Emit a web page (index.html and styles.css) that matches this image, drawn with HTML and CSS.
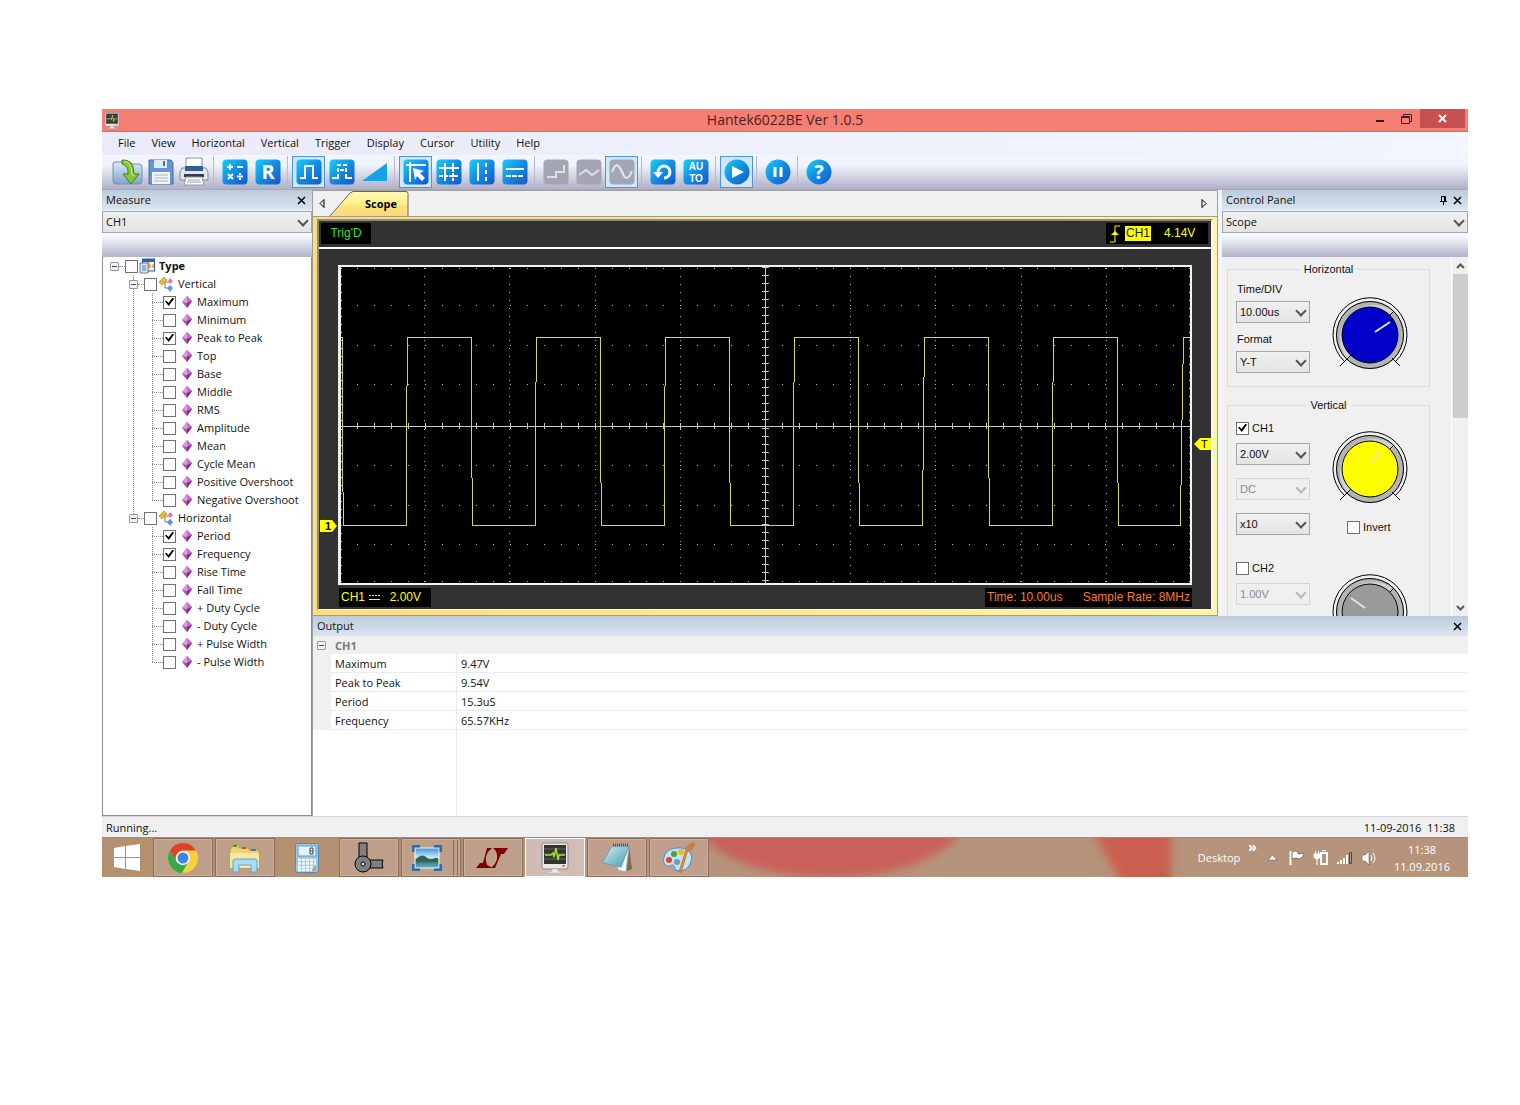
FILE: index.html
```html
<!DOCTYPE html>
<html lang="en">
<head>
<meta charset="utf-8">
<title>Hantek6022BE Ver 1.0.5</title>
<link rel="stylesheet" href="styles.css">
</head>
<body>
<svg class="defs" width="0" height="0" aria-hidden="true">
  <defs>
    <linearGradient id="blue" x1="0" y1="0" x2="1" y2="1"><stop offset="0" stop-color="#16d0fb"/><stop offset=".5" stop-color="#128ce4"/><stop offset="1" stop-color="#1457c8"/></linearGradient>
    <linearGradient id="folder" x1="0" y1="0" x2="0" y2="1"><stop offset="0" stop-color="#dce9f6"/><stop offset="1" stop-color="#7fa4cf"/></linearGradient>
    <linearGradient id="tabfill" x1="0" y1="0" x2="0" y2="1"><stop offset="0" stop-color="#fffbb0"/><stop offset=".5" stop-color="#fff08c"/><stop offset=".6" stop-color="#ffe07c"/><stop offset="1" stop-color="#fddc78"/></linearGradient>
    <linearGradient id="sky" x1="0" y1="0" x2="0" y2="1"><stop offset="0" stop-color="#3f92dc"/><stop offset=".5" stop-color="#d3ecfa"/><stop offset=".6" stop-color="#356c55"/><stop offset="1" stop-color="#5fb3da"/></linearGradient>
    <linearGradient id="note" x1="0" y1="0" x2="1" y2="1"><stop offset="0" stop-color="#d5f0f4"/><stop offset="1" stop-color="#3d9cb4"/></linearGradient>
    <filter id="soft" x="-20%" y="-50%" width="140%" height="200%"><feGaussianBlur stdDeviation="5"/></filter>
    <symbol id="gem" viewBox="0 0 10 12"><path d="M5 0 10 5 5 12 0 6z" fill="#b052b4"/><path d="M5 0 0 6 5 7z" fill="#e09ae0"/><path d="M5 0 10 5 5 7z" fill="#c070c8"/><path d="M5 7 10 5 5 12z" fill="#7c2c88"/></symbol>
    <symbol id="branch" viewBox="0 0 16 16"><path d="M5 6h6M7 6v6h4" fill="none" stroke="#777"/><path d="M1 6 6 1l3 3-5 5z" fill="#e8b830" stroke="#b08414" stroke-width=".6"/><path d="m12 2 3 3-3 3-2-3z" fill="#d472cc"/><path d="m12 9 3 3-3 4-3-4z" fill="#5b98dc"/></symbol>
    <symbol id="scopepc" viewBox="0 0 28 32"><rect x="1" y="1" width="26" height="26" rx="2" fill="#e8e8e8" stroke="#888"/><rect x="3" y="3" width="22" height="19" fill="#333"/><path d="M3 7h22M3 12h22M3 17h22" stroke="#666"/><path d="M4 13h6l2-2 1 4 2-9 2 12 1-5h6" fill="none" stroke="#a8e01c" stroke-width="1.5"/><path d="M21 24h3" stroke="#c22"/><path d="M11 27h6v2l4 1v1H7v-1l4-1z" fill="#ececec" stroke="#aaa" stroke-width=".5"/></symbol>
  </defs>
</svg>
<div class="window">
  <header class="titlebar">
    <svg class="appicon" width="16" height="17"><use href="#scopepc"/></svg>
    <h1>Hantek6022BE Ver 1.0.5</h1>
    <div class="winbtns">
      <button aria-label="Minimize"><svg width="10" height="10"><path d="M1 7h8" stroke="#222" stroke-width="2"/></svg></button>
      <button aria-label="Restore"><svg width="11" height="11" fill="none" stroke="#402020"><path d="M.5 3.500h8v7h-8zM.5 4.500h8M2.500 3V1.500h8v7H9"/></svg></button>
      <button class="close" aria-label="Close"><svg width="9" height="9"><path d="m1 1 7 7m0-7L1 8" stroke="#fff" stroke-width="2"/></svg></button>
    </div>
  </header>

  <nav class="menubar">
    <a href="#">File</a><a href="#">View</a><a href="#">Horizontal</a><a href="#">Vertical</a><a href="#">Trigger</a><a href="#">Display</a><a href="#">Cursor</a><a href="#">Utility</a><a href="#">Help</a>
  </nav>

  <div class="toolbar" role="toolbar" aria-label="Tools">
    <button aria-label="Open"><svg width="32" height="28"><path d="M1 6q0-2 2-2h7l2 2h15q3 0 3 3v14q0 3-3 3H4q-3 0-3-3z" fill="url(#folder)" stroke="#7590b4"/><path d="M10 2q12-1 12 14h5l-8 10-8-10h5Q17 8 10 6z" fill="#85c832" stroke="#417d15"/><path d="M12 3q8 1 8 14h3" fill="none" stroke="#caeb91"/></svg></button>
    <button aria-label="Save"><svg width="26" height="28"><path d="M1 2h22l2 3v21H1z" fill="#6794d3" stroke="#486eaa"/><path d="M6 2h13v8H6z" fill="#dceafa"/><path d="M15 3h2v5h-2z" fill="#4974b3"/><path d="M4 14h18v12H4z" fill="#f3f5f7"/><path d="M6 17h14M6 20h14M6 23h14" stroke="#aab6c4"/></svg></button>
    <button aria-label="Print"><svg width="30" height="30"><path d="M7 1h16v11H7z" fill="#fff" stroke="#8494a9"/><path d="M3 11h24l2 4v8H1v-8z" fill="#e3e7ec" stroke="#7e8a99"/><path d="M6 9h18v5H6z" fill="#345b94"/><path d="M5 17h20v3H5z" fill="#323d4c"/><path d="M7 20h16l2 8H5z" fill="#fff" stroke="#8d99a8"/><path d="M9 23h12M8 25h14" stroke="#9ba8b8"/></svg></button>
    <i></i>
    <button aria-label="Math"><svg width="26" height="26"><rect x=".5" y=".5" width="25" height="25" rx="4" fill="url(#blue)"/><path d="M5 8h6M8 5v6M15 8h6M6 15l5 5m0-5-5 5M15 17.500h6" stroke="#fff" stroke-width="2"/><path d="M17 14h2v2h-2zM17 19h2v2h-2z" fill="#fff"/></svg></button>
    <button aria-label="Reference"><svg width="26" height="26"><rect x=".5" y=".5" width="25" height="25" rx="4" fill="url(#blue)"/><text x="13" y="20" text-anchor="middle" class="t-r">R</text></svg></button>
    <i></i>
    <button class="on" aria-label="Square wave"><svg width="26" height="26"><rect x=".5" y=".5" width="25" height="25" rx="4" fill="url(#blue)"/><path d="M4 19h5V7h8v12h5" fill="none" stroke="#fff" stroke-width="2"/></svg></button>
    <button aria-label="Dotted wave"><svg width="26" height="26"><rect x=".5" y=".5" width="25" height="25" rx="4" fill="url(#blue)"/><path d="M3 19h7m6 0h7M8 6h4m2 0h4M11 11h4" fill="none" stroke="#fff" stroke-width="2"/><path d="M9 9v4m0 2v4m8-10v4m0 2v4" stroke="#fff" stroke-width="2"/></svg></button>
    <button aria-label="Ramp"><svg width="26" height="26"><path d="M0 22 25 4v18z" fill="#18a4e4"/></svg></button>
    <i></i>
    <button class="on" aria-label="Cursor track"><svg width="26" height="26"><rect x=".5" y=".5" width="25" height="25" rx="4" fill="url(#blue)"/><path d="M3 6h20M7 3v20" stroke="#fff" stroke-width="2"/><path d="m10 9 11 3-4 2 5 5-3 3-5-5-2 4z" fill="#fff"/></svg></button>
    <button aria-label="Cursor cross"><svg width="26" height="26"><rect x=".5" y=".5" width="25" height="25" rx="4" fill="url(#blue)"/><path d="M3 9h20M9 4v18" stroke="#fff" stroke-width="2"/><path d="M3 17h20M17 4v18" stroke="#fff" stroke-width="2" stroke-dasharray="4 1"/></svg></button>
    <button aria-label="Cursor vertical"><svg width="26" height="26"><rect x=".5" y=".5" width="25" height="25" rx="4" fill="url(#blue)"/><path d="M9 4v18" stroke="#fff" stroke-width="2"/><path d="M17 4v18" stroke="#fff" stroke-width="2" stroke-dasharray="4 3"/></svg></button>
    <button aria-label="Cursor horizontal"><svg width="26" height="26"><rect x=".5" y=".5" width="25" height="25" rx="4" fill="url(#blue)"/><path d="M4 10h18" stroke="#fff" stroke-width="2"/><path d="M4 17h18" stroke="#fff" stroke-width="2" stroke-dasharray="5 1"/></svg></button>
    <i></i>
    <button aria-label="Step"><svg width="26" height="26"><rect x=".5" y=".5" width="25" height="25" rx="4" fill="#a4a6b4"/><path d="M4 18h9v-5h8V6" fill="none" stroke="#dfe1ea" stroke-width="2"/></svg></button>
    <button aria-label="Linear"><svg width="26" height="26"><rect x=".5" y=".5" width="25" height="25" rx="4" fill="#a4a6b4"/><path d="m3 16 7-5 6 5 7-5" fill="none" stroke="#dfe1ea" stroke-width="2"/></svg></button>
    <button class="on" aria-label="Sine"><svg width="26" height="26"><rect x=".5" y=".5" width="25" height="25" rx="4" fill="#a4a6b4"/><path d="M3 13C7 2 10 6 13 13s6 9 10-1" fill="none" stroke="#e4e6ee" stroke-width="2"/></svg></button>
    <i></i>
    <button aria-label="Reset"><svg width="26" height="26"><rect x=".5" y=".5" width="25" height="25" rx="4" fill="url(#blue)"/><path d="M8 13a6 6 0 1 1 6 6" fill="none" stroke="#fff" stroke-width="3"/><path d="M3 13h10l-5 6z" fill="#fff"/></svg></button>
    <button aria-label="Auto"><svg width="26" height="26"><rect x=".5" y=".5" width="25" height="25" rx="4" fill="url(#blue)"/><text x="13" y="11" text-anchor="middle" class="t-a">AU</text><text x="13" y="23" text-anchor="middle" class="t-a">TO</text></svg></button>
    <i></i>
    <button class="on" aria-label="Run"><svg width="26" height="26"><circle cx="13" cy="13" r="12.500" fill="url(#blue)"/><path d="m8 7 12 6-12 6z" fill="#fff"/></svg></button>
    <i></i>
    <button aria-label="Pause"><svg width="26" height="26"><circle cx="13" cy="13" r="12.500" fill="url(#blue)"/><path d="M10 8v10m6-10v10" stroke="#fff" stroke-width="3"/></svg></button>
    <i></i>
    <button aria-label="Help"><svg width="26" height="26"><circle cx="13" cy="13" r="12.500" fill="url(#blue)"/><text x="13" y="20" text-anchor="middle" class="t-r">?</text></svg></button>
  </div>

  <main class="work">
    <aside class="measure">
      <div class="panelhead"><h2>Measure</h2><button aria-label="Close measure"><svg width="9" height="9"><path d="m1 1 7 7m0-7L1 8" stroke="#000" stroke-width="1.500"/></svg></button></div>
      <label class="combo wide"><select aria-label="Channel"><option>CH1</option></select></label>
      <div class="strip"></div>
      <div class="tree">
        <div class="row root"><b class="exp"></b><s></s><input type="checkbox" id="m0"><svg width="16" height="16"><rect x="3.500" y="1" width="12" height="12" fill="#f4f7fc" stroke="#2c559c"/><path d="M3 1h13v3H3z" fill="#2d62bb"/><path d="M9 4v8M5 8h10" stroke="#e4ae25" stroke-width="3" stroke-dasharray="3 1"/><path d="M1 5h8v10H1z" fill="#d8e6f7" stroke="#5b80b5"/><path d="M3 8h4M3 10h4M3 12h4" stroke="#5b80b5"/></svg><label for="m0">Type</label></div>
        <ul class="groups">
          <li>
            <div class="row"><b class="exp"></b><s></s><input type="checkbox" id="m1"><svg width="16" height="16"><use href="#branch"/></svg><label for="m1">Vertical</label></div>
            <ul class="leaves">
              <li><s></s><input type="checkbox" id="v1" checked><svg width="10" height="12"><use href="#gem"/></svg><label for="v1">Maximum</label></li>
              <li><s></s><input type="checkbox" id="v2"><svg width="10" height="12"><use href="#gem"/></svg><label for="v2">Minimum</label></li>
              <li><s></s><input type="checkbox" id="v3" checked><svg width="10" height="12"><use href="#gem"/></svg><label for="v3">Peak to Peak</label></li>
              <li><s></s><input type="checkbox" id="v4"><svg width="10" height="12"><use href="#gem"/></svg><label for="v4">Top</label></li>
              <li><s></s><input type="checkbox" id="v5"><svg width="10" height="12"><use href="#gem"/></svg><label for="v5">Base</label></li>
              <li><s></s><input type="checkbox" id="v6"><svg width="10" height="12"><use href="#gem"/></svg><label for="v6">Middle</label></li>
              <li><s></s><input type="checkbox" id="v7"><svg width="10" height="12"><use href="#gem"/></svg><label for="v7">RMS</label></li>
              <li><s></s><input type="checkbox" id="v8"><svg width="10" height="12"><use href="#gem"/></svg><label for="v8">Amplitude</label></li>
              <li><s></s><input type="checkbox" id="v9"><svg width="10" height="12"><use href="#gem"/></svg><label for="v9">Mean</label></li>
              <li><s></s><input type="checkbox" id="v10"><svg width="10" height="12"><use href="#gem"/></svg><label for="v10">Cycle Mean</label></li>
              <li><s></s><input type="checkbox" id="v11"><svg width="10" height="12"><use href="#gem"/></svg><label for="v11">Positive Overshoot</label></li>
              <li><s></s><input type="checkbox" id="v12"><svg width="10" height="12"><use href="#gem"/></svg><label for="v12">Negative Overshoot</label></li>
            </ul>
          </li>
          <li>
            <div class="row"><b class="exp"></b><s></s><input type="checkbox" id="m2"><svg width="16" height="16"><use href="#branch"/></svg><label for="m2">Horizontal</label></div>
            <ul class="leaves">
              <li><s></s><input type="checkbox" id="h1" checked><svg width="10" height="12"><use href="#gem"/></svg><label for="h1">Period</label></li>
              <li><s></s><input type="checkbox" id="h2" checked><svg width="10" height="12"><use href="#gem"/></svg><label for="h2">Frequency</label></li>
              <li><s></s><input type="checkbox" id="h3"><svg width="10" height="12"><use href="#gem"/></svg><label for="h3">Rise Time</label></li>
              <li><s></s><input type="checkbox" id="h4"><svg width="10" height="12"><use href="#gem"/></svg><label for="h4">Fall Time</label></li>
              <li><s></s><input type="checkbox" id="h5"><svg width="10" height="12"><use href="#gem"/></svg><label for="h5">+ Duty Cycle</label></li>
              <li><s></s><input type="checkbox" id="h6"><svg width="10" height="12"><use href="#gem"/></svg><label for="h6">- Duty Cycle</label></li>
              <li><s></s><input type="checkbox" id="h7"><svg width="10" height="12"><use href="#gem"/></svg><label for="h7">+ Pulse Width</label></li>
              <li><s></s><input type="checkbox" id="h8"><svg width="10" height="12"><use href="#gem"/></svg><label for="h8">- Pulse Width</label></li>
            </ul>
          </li>
        </ul>
      </div>
    </aside>

    <section class="scope">
      <div class="tabs">
        <button class="arrow" aria-label="Previous tab"><svg width="6" height="9"><path d="M5 .5v8L1 4.500z" fill="none" stroke="#000"/></svg></button>
        <button class="tab"><svg width="80" height="25"><path d="M0 25 20 2 23 .5h53q2 0 2 2V25" fill="url(#tabfill)" stroke="#666"/></svg><span>Scope</span></button>
        <button class="arrow" aria-label="Next tab"><svg width="6" height="9"><path d="M1 .5v8l4-4z" fill="none" stroke="#000"/></svg></button>
      </div>
      <div class="frame">
        <div class="screen">
          <div class="status">
            <span class="trig">Trig'D</span>
            <span class="level"><svg width="10" height="18"><path d="M0 17h5V1h5" fill="none" stroke="#ff0"/><path d="m5 6 4 4H1z" fill="#ff0"/></svg><mark>CH1</mark><span>4.14V</span></span>
          </div>
          <div class="plotarea">
            <svg class="marker one" width="17" height="12"><path d="M0 0h12l5 6-5 6H0z" fill="#ff0"/><text x="5" y="10">1</text></svg>
            <div class="plot">
              <svg viewBox="0 0 849 315" preserveAspectRatio="none" shape-rendering="crispEdges" role="img" aria-label="Channel 1 square wave">
                <g stroke="#b8b8b8" stroke-dasharray="1 16" fill="none">
                  <path d="M-1 1.500h850M-1 38.500h850M-1 78.500h850M-1 117.500h850M-1 197.500h850M-1 237.500h850M-1 276.500h850M-1 313.500h850"/>
                </g>
                <g stroke="#b8b8b8" stroke-dasharray="1 7" fill="none">
                  <path d="M.5 1v314M83.500 1v314M168.500 1v314M254.500 1v314M339.500 1v314M509.500 1v314M594.500 1v314M680.500 1v314M765.500 1v314M848.500 1v314"/>
                </g>
                <path d="M0 158.500h849M424.500 0v315" stroke="#c8c8c8"/>
                <path d="M-1 158.500h850" stroke="#c8c8c8" stroke-width="5" stroke-dasharray="1 16"/>
                <path d="M424.500 0v315" stroke="#c8c8c8" stroke-width="7" stroke-dasharray="1 7"/>
                <path d="M0 70.500h1.500v120l1 67h63v-87l1-100h64v90l1 97h63v-97l1-90h64v100l1 87h63v-87l1-100h64v100l1 87h63v-97l1-90h64v100l1 87h63l1-107 1-80h64v90l1 97h63v-97l1-90h64v100l1 87h62l1-77 2-110h7" fill="none" stroke="#d8d850"/>
              </svg>
            </div>
            <svg class="marker trg" width="17" height="12"><path d="M17 0H6L0 6l6 6h11z" fill="#ff0"/><text x="7" y="10">T</text></svg>
          </div>
          <div class="readout">
            <span class="chan">CH1<svg width="11" height="7"><path d="M0 1.500h11" stroke="#ff0" stroke-dasharray="2 1"/><path d="M0 5.500h11" stroke="#ff0"/></svg><span>2.00V</span></span>
            <span class="time"><span>Time: 10.00us</span><span>Sample Rate: 8MHz</span></span>
          </div>
        </div>
      </div>
    </section>

    <aside class="control">
      <div class="panelhead"><h2>Control Panel</h2><button aria-label="Pin"><svg width="9" height="10" stroke="#000" fill="none"><path d="M2.500 6V1.500h4V6M5.500 1v5M1 6.500h7M4.500 7v3"/></svg></button><button aria-label="Close control panel"><svg width="9" height="9"><path d="m1 1 7 7m0-7L1 8" stroke="#000" stroke-width="1.500"/></svg></button></div>
      <label class="combo wide"><select aria-label="Panel"><option>Scope</option></select></label>
      <div class="strip"></div>
      <div class="scroller">
        <div class="boxes">
          <fieldset class="hor">
            <legend>Horizontal</legend>
            <div class="fields">
              <label class="cap" for="tdiv">Time/DIV</label>
              <span class="combo"><select id="tdiv"><option>10.00us</option></select></span>
              <label class="cap" for="fmt">Format</label>
              <span class="combo"><select id="fmt"><option>Y-T</option></select></span>
            </div>
            <svg class="knob" width="76" height="76" fill="none" stroke="#000"><circle cx="38" cy="38" r="34" fill="#b4b4b4" stroke="none"/><path d="M15 62A33.500 33.500 0 0 1 62 15L38 38z" fill="#d2d2d2" stroke="none"/><path d="M8 69 19 58M68 69 60 61M57 19l5-5"/><path d="M13 65A37 37 0 1 1 63 65"/><circle cx="38" cy="38" r="33.500"/><circle cx="38" cy="38" r="28" fill="#0000c8"/><path d="m43 35 15-10" stroke="#e4e4f4" stroke-width="2"/></svg>
          </fieldset>
          <fieldset class="ver">
            <legend>Vertical</legend>
            <div class="fields">
              <label class="tick"><input type="checkbox" checked>CH1</label>
              <span class="combo"><select aria-label="CH1 volts"><option>2.00V</option></select></span>
              <span class="combo off"><select aria-label="CH1 coupling" disabled><option>DC</option></select></span>
              <span class="combo"><select aria-label="CH1 probe"><option>x10</option></select></span>
              <label class="tick second"><input type="checkbox">CH2</label>
              <span class="combo off"><select aria-label="CH2 volts" disabled><option>1.00V</option></select></span>
            </div>
            <div class="knobs">
              <svg class="knob" width="76" height="76" fill="none" stroke="#000"><circle cx="38" cy="38" r="34" fill="#b4b4b4" stroke="none"/><path d="M15 62A33.500 33.500 0 0 1 62 15L38 38z" fill="#d2d2d2" stroke="none"/><path d="M8 69 19 58M68 69 60 61M57 19l5-5"/><path d="M13 65A37 37 0 1 1 63 65"/><circle cx="38" cy="38" r="33.500"/><circle cx="38" cy="38" r="28" fill="#ff0"/><path d="m41 33 6-15" stroke="#e8e8a0" stroke-width="2"/></svg>
              <label class="tick"><input type="checkbox">Invert</label>
              <svg class="knob" width="76" height="76" fill="none" stroke="#000"><circle cx="38" cy="38" r="34" fill="#b4b4b4" stroke="none"/><path d="M15 62A33.500 33.500 0 0 1 62 15L38 38z" fill="#d2d2d2" stroke="none"/><path d="M8 69 19 58M68 69 60 61M57 19l5-5"/><path d="M13 65A37 37 0 1 1 63 65"/><circle cx="38" cy="38" r="33.500"/><circle cx="38" cy="38" r="28" fill="#9a9a9a"/><path d="m19 24 14 10" stroke="#e4e4d0" stroke-width="2"/></svg>
            </div>
          </fieldset>
        </div>
        <div class="bar"><svg width="9" height="7"><path d="m1 5 3.500-3.500L8 5" fill="none" stroke="#555" stroke-width="2"/></svg><i></i><svg width="9" height="7"><path d="m1 2 3.500 3.500L8 2" fill="none" stroke="#555" stroke-width="2"/></svg></div>
      </div>
    </aside>

    <section class="output">
      <div class="panelhead"><h2>Output</h2><button aria-label="Close output"><svg width="9" height="9"><path d="m1 1 7 7m0-7L1 8" stroke="#000" stroke-width="1.500"/></svg></button></div>
      <div class="results">
        <table>
          <colgroup><col class="c-gut"><col class="c-name"><col></colgroup>
          <thead><tr><th class="gut"><b class="exp"></b></th><th colspan="2">CH1</th></tr></thead>
          <tbody>
            <tr><td class="gut"></td><td class="name">Maximum</td><td>9.47V</td></tr>
            <tr><td class="gut"></td><td class="name">Peak to Peak</td><td>9.54V</td></tr>
            <tr><td class="gut"></td><td class="name">Period</td><td>15.3uS</td></tr>
            <tr><td class="gut"></td><td class="name">Frequency</td><td>65.57KHz</td></tr>
          </tbody>
        </table>
      </div>
    </section>
  </main>

  <footer class="statusbar"><span>Running...</span><span>11-09-2016&nbsp; 11:38</span></footer>

  <div class="taskbar">
    <svg class="wall" width="1366" height="40" aria-hidden="true"><rect width="1366" height="40" fill="#b6947b"/><rect width="420" height="40" fill="#b08e6c" opacity=".7"/><g filter="url(#soft)"><ellipse cx="728" cy="-30" rx="140" ry="70" fill="#c9605a"/><path d="M985-15h84v70h-43z" fill="#cb5f50"/><path d="M1030 50l39-20v20z" fill="#b4663c"/></g></svg>
    <button class="start" aria-label="Start"><svg width="28" height="28" fill="#fff"><path d="M1 4 12 2v11H1zM13 2l14-2v13H13zM1 14h11v11L1 23zM13 14h14v13l-14-2z"/></svg></button>
    <button class="task" aria-label="Chrome"><svg width="30" height="30"><circle cx="15" cy="15" r="15" fill="#fcd03c"/><path d="M2 7.500A15 15 0 0 1 28 7.500H15a7.500 7.500 0 0 0-6.500 11z" fill="#e0412f"/><path d="M2 7.500A15 15 0 0 0 14 30l6.500-11.500a7.500 7.500 0 0 1-12 0z" fill="#36a852"/><circle cx="15" cy="15" r="7" fill="#fff"/><circle cx="15" cy="15" r="5.500" fill="#3f83ee"/></svg></button>
    <button class="task" aria-label="File Explorer"><svg width="32" height="30"><path d="M1 5h2V2h7v3h10v2h10v18H1z" fill="#ecd47c" stroke="#b99a42"/><path d="M4 2h4v2H4z" fill="#2e9c46"/><path d="M13 4h4v2h-4z" fill="#d34c2c"/><path d="M22 6h5v2h-5z" fill="#3681cc"/><path d="M1 10h29v15H1z" fill="#f7e79f"/><path d="M4 18q0-2 2-2h20q2 0 2 2v11h-6v-7H10v7H4z" fill="#a8daf0" stroke="#5aa8cf"/></svg></button>
    <button class="task plain" aria-label="Calculator"><svg width="24" height="30"><rect x=".5" y=".5" width="23" height="29" rx="2" fill="#9cc6e8" stroke="#5888b4"/><rect x="3" y="3" width="18" height="10" fill="#e2f1fa" stroke="#6e99bd"/><path d="M15 5h3v6h-3zM15 8h3" fill="none" stroke="#345"/><path d="M3 17h18M3 20.500h18M3 24h18M3 27h14" stroke="#f4faff" stroke-width="2.500" stroke-dasharray="3 1"/><path d="M18 23h3v5h-3z" fill="#e99b38"/></svg></button>
    <button class="task" aria-label="Linkage tool"><svg width="32" height="32" fill="#808080" stroke="#000"><path d="M6 1h8v16H6zM15 18h15l-1 4 1 4H15z"/><circle cx="10" cy="22" r="8"/><circle cx="10" cy="22" r="2" fill="#ddd"/></svg></button>
    <button class="task stack" aria-label="Photos"><svg width="30" height="26"><rect x="3" y="3" width="24" height="20" fill="url(#sky)" stroke="#f2f8fc"/><path d="M4 14q6-6 10-2t9 1h3v4H4z" fill="#2f6450"/><path d="M1 7V1h7M22 1h7v6M29 19v6h-7M8 25H1v-6" fill="none" stroke="#2a6cb0" stroke-width="3"/></svg></button>
    <button class="task" aria-label="LTspice"><svg width="34" height="22" fill="#7c0000"><path d="M11 1h5q-9 7-5 17l6 3H0l4-5h3z"/><path d="M17 1h15l-4 6h-3l-6 14h-4q9-7 5-17z"/></svg></button>
    <button class="task active" aria-label="Hantek6022BE"><svg width="28" height="32"><use href="#scopepc"/></svg></button>
    <button class="task" aria-label="Notepad"><svg width="32" height="30"><path d="M28 3l3 23-7 3z" fill="#7d6a4d"/><path d="M12 3 28 3l-3 26-8-2z" fill="#f0f4f4" stroke="#a5b0b4"/><path d="M11 3h17l-8 21L1 20z" fill="url(#note)" stroke="#709ca8"/><path d="M12 2h16" stroke="#555" stroke-width="3" stroke-dasharray="1 1"/></svg></button>
    <button class="task" aria-label="Paint"><svg width="34" height="32"><path d="M15 6C5 6 0 14 2 21q3 5 8 2 3 0 3 5 9 3 14-4C34 12 26 5 15 6z" fill="#c3e2f3" stroke="#4a8db8"/><circle cx="7" cy="18" r="3" fill="#d94a34"/><circle cx="12" cy="12" r="3" fill="#45a047"/><circle cx="19" cy="10" r="3" fill="#efb72c"/><circle cx="15" cy="20" r="3" fill="#7a9bb0"/><path d="m26 8-7 23-2-1 7-23z" fill="#e08a35" stroke="#a8601c" stroke-width=".5"/><path d="M24 8q-2-5 8-8 3 5-4 9z" fill="#bf8450"/></svg></button>
    <div class="tray">
      <span class="desk">Desktop</span>
      <span class="more">»</span>
      <svg class="up" width="9" height="6"><path d="M0 5 4.500 0 9 5z" fill="#fff" stroke="#555" stroke-width=".5"/></svg>
      <svg width="16" height="16"><path d="M1.500 1v14" stroke="#fff" stroke-width="2"/><path d="M3 2q4-2 6 0v2q3 0 6-1-1 5-5 6-3-2-7 0z" fill="#fff" stroke="#544" stroke-width=".6"/></svg>
      <svg width="16" height="16" fill="none" stroke="#fff"><rect x="8" y="3" width="6" height="11" stroke-width="2"/><path d="M9 .5h4M2.500 1v4M5.500 1v4M4 8v7"/><path d="M1 4h6v3L5 9H3L1 7z" fill="#fff"/></svg>
      <svg width="16" height="14" fill="#fff"><path d="M0 11h2v2H0zM3 9h2v4H3zM6 7h2v6H6zM9 4h2v9H9z"/><path d="M12.500 1.500h2v11h-2z" fill="#a79a92" stroke="#544"/></svg>
      <svg width="16" height="16" fill="none" stroke="#fff"><path d="M1 5h3l4-4v14l-4-4H1z" fill="#fff" stroke="#544" stroke-width=".5"/><path d="M10 5q2 3 0 6M12 3q4 5 0 10"/></svg>
      <time>11:38<br>11.09.2016</time>
    </div>
  </div>
</div>
</body>
</html>
```
FILE: styles.css
```css
* { box-sizing: border-box; }
body { margin: 0; padding: 109px 52px 0 102px; background: #fff; font: 11px/18px "Open Sans", "Noto Sans", sans-serif; color: #111; }
h1, h2, ul, fieldset { margin: 0; padding: 0; font-weight: 400; }
h2 { font-size: 11px; }
ul { list-style: none; }
button { padding: 0; border: 0; background: none; font: inherit; color: inherit; display: grid; place-items: center; }
svg { display: block; flex: none; }
.defs { position: absolute; }
.window { background: #f0f0f0; }

.titlebar { height: 23px; display: grid; grid-template-columns: 160px 1fr 160px; align-items: center; background: #f67f74; border-bottom: 1px solid #cf7068; }
.titlebar h1 { text-align: center; font-size: 14px; line-height: 22px; color: #4a2320; }
.appicon { margin-left: 2px; }
.winbtns { display: flex; justify-content: flex-end; align-self: start; padding-right: 3px; }
.winbtns button { width: 26px; height: 19px; }
.winbtns button.close { width: 45px; background: #c75050; margin-left: 1px; }

.menubar { display: flex; gap: 16px; height: 23px; padding-left: 16px; background: linear-gradient(90deg, #eaeafa, #f2f6fe); line-height: 22px; }
.menubar a { color: #111; text-decoration: none; }

.toolbar { display: flex; height: 35px; padding: 1px 0 0 9px; background: linear-gradient(#f3f6fd, #f0f3fb 30%, #b0b0c8); border-bottom: 1px solid #a8a8b8; }
.toolbar button { width: 33px; height: 32px; }
.toolbar button.on { border: 1px solid #4a97e0; background: #cfe6fb; }
.toolbar i { width: 8px; height: 32px; border-right: 4px solid transparent; border-left: 3px solid transparent; background: #b8bac6; background-clip: padding-box; }
.t-r { font: 700 20px "Open Sans", sans-serif; fill: #fff; }
.t-a { font: 700 10px "Liberation Sans", sans-serif; fill: #fff; }

.work { display: grid; grid-template-columns: 210px 1fr 250px; grid-template-rows: 426px 200px; background: #f0f4fc; }
.measure { grid-row: 1 / 3; display: flex; flex-direction: column; }
.panelhead { display: flex; align-items: center; height: 20px; padding: 0 5px 0 4px; background: linear-gradient(#bccbdb, #d9e5f0); }
.panelhead h2 { flex: 1; }
.panelhead button { width: 17px; height: 17px; margin-right: -3px; }
.combo { position: relative; display: block; }
.combo::after { content: ""; position: absolute; right: 5px; top: 6px; width: 6px; height: 6px; border: solid #555; border-width: 0 2px 2px 0; transform: rotate(45deg); pointer-events: none; }
.combo select { appearance: none; display: block; width: 100%; height: 22px; padding: 0 3px; border: 1px solid #a6a6a6; border-radius: 0; background: linear-gradient(#f0f0f0, #e4e4e4); font: inherit; color: inherit; }
.combo.wide { margin-top: 1px; }
.combo.off select { border-color: #d4d4d4; background: #efefef; color: #8a8a8a; opacity: 1; }
.combo.off::after { border-color: #b8b8b8; }
.strip { height: 24px; background: linear-gradient(#f4f7fe 15%, #b2b2c8); }

.tree { flex: 1; padding: 0 0 0 7px; background: #fff; border: 1px solid #8c8c8c; border-top: 0; }
.row, .leaves li { display: flex; align-items: center; height: 18px; white-space: nowrap; }
.exp { width: 9px; height: 9px; flex: none; border: 1px solid #999; border-radius: 1px; background: linear-gradient(#3b4a7c, #3b4a7c) center / 5px 1px no-repeat #f2f2f2; }
.tree s { width: 6px; height: 1px; border-top: 1px dotted #888; }
.row svg { margin: 0 4px 0 1px; }
.root label { font-weight: 700; }
.groups { padding-left: 19px; position: relative; }
.groups::before { content: ""; position: absolute; left: 23px; top: 0; bottom: 153px; border-left: 1px dotted #888; }
.groups .exp { position: relative; }
.leaves { padding-left: 23px; position: relative; }
.leaves::before { content: ""; position: absolute; left: 23px; top: 0; bottom: 9px; border-left: 1px dotted #888; }
.leaves s { width: 11px; }
.leaves svg { margin: 0 5px 0 6px; }
input[type="checkbox"] { appearance: none; flex: none; width: 13px; height: 13px; margin: 0; border: 1px solid #707070; background: #fff; display: grid; place-items: center; }
input:checked::before { content: ""; width: 9px; height: 9px; background: #000; clip-path: polygon(0 45%, 15% 35%, 38% 60%, 85% 0, 100% 15%, 42% 95%); }

.scope { display: flex; flex-direction: column; }
.tabs { display: flex; height: 26px; align-items: flex-end; border: solid #a0a0a0; border-width: 1px 1px 0; background: #f0f0f0; }
.arrow { width: 17px; height: 25px; }
.arrow:last-child { margin: 0 5px 0 auto; }
.tab > * { grid-area: 1 / 1; }
.tab span { padding-left: 22px; font-weight: 700; color: #000; }
.frame { flex: 1; display: flex; padding: 2px 4px 5px; border: 1px solid #a09c8c; background: linear-gradient(90deg, #fddc80, #fdf6a4); }
.screen { flex: 1; display: flex; flex-direction: column; background: #323232; border: solid; border-width: 2px 2px 1px; border-color: #8c8a7c #f8f8f0 #f8f8f0 #8c8a7c; font: 12px/21px "Liberation Sans", Arial, sans-serif; }
.status { display: flex; justify-content: space-between; height: 28px; padding: 2px 3px 3px 2px; border-bottom: 2px solid #fff; }
.trig { width: 50px; text-align: center; background: #000; color: #30e040; }
.level { display: flex; align-items: center; width: 102px; padding-left: 4px; background: #000; color: #ff0; }
.level mark { margin: 0 13px 0 5px; padding: 0 1px; line-height: 15px; background: #ff0; color: #222; }
.plotarea { position: relative; flex: 1; display: flex; padding: 16px 19px 0; }
.plot { flex: 1; border: solid #f2f2f2; border-width: 2px 2px 2px 3px; background: #000; }
.plot svg { width: 100%; height: 100%; }
.marker { position: absolute; top: 271px; left: 1px; font: 700 11px "Liberation Sans", sans-serif; }
.marker.trg { top: 189px; left: auto; right: 0; font-weight: 400; }
.readout { display: flex; justify-content: space-between; padding: 3px 19px 2px 20px; line-height: 19px; }
.readout > span { display: flex; align-items: center; background: #000; }
.readout .chan { width: 92px; justify-content: space-between; padding: 0 10px 0 2px; color: #ff0; }
.chan svg { margin-right: 6px; }
.readout .time { gap: 20px; padding: 0 2px; color: #f47a2c; }

.control { display: flex; flex-direction: column; padding-left: 4px; min-height: 0; }
.scroller { flex: 1; min-height: 0; display: flex; overflow: hidden; background: #f0f0f0; font: 11px/14px "Liberation Sans", Arial, sans-serif; }
.boxes { flex: 1; padding: 4px 21px 0 5px; height: 0; }
.bar { display: flex; flex-direction: column; align-items: center; width: 17px; padding: 6px 0 5px; border-left: 1px solid #fff; }
.bar i { width: 15px; height: 144px; margin: 4px 0 auto; background: #cdcdcd; }
fieldset { border: 1px solid #dcdcdc; display: flex; justify-content: space-between; padding: 0 8px 11px; min-width: 0; }
legend { margin: 0 auto; padding: 0 4px; line-height: 16px; }
.fields { width: 74px; }
.fields .combo { margin-bottom: 13px; }
.cap { display: block; margin: 5px 0; padding-left: 1px; }
.hor .cap + .combo { margin-bottom: 9px; }
.hor .cap + .combo:last-child { margin-bottom: 2px; }
.hor .knob { margin: 20px 13px 0 0; }
.ver { margin-top: 10px; }
.tick { display: flex; align-items: center; gap: 3px; height: 14px; }
.fields .tick { margin: 8px 0; }
.fields .second { margin-top: 26px; }
.knobs { margin: 18px 13px 0 0; }
.knobs .tick { margin: 13px 0 40px 15px; }

.output { grid-column: 2 / 4; border-left: 1px solid #a0a0a0; display: flex; flex-direction: column; background: #fff; }
.output h2 { line-height: 20px; }
.results { flex: 1; background: linear-gradient(#ececec, #ececec) 143px 0 / 1px 100% no-repeat; }
table { width: 100%; border-collapse: separate; border-spacing: 0; table-layout: fixed; line-height: 17px; }
td, th { height: 19px; padding: 0 4px; text-align: left; border-bottom: 1px solid #ececec; }
th { height: 18px; padding-top: 0; background: #f0f0f0; color: #777; border: 0; }
.c-gut { width: 18px; }
.c-name { width: 126px; }
.gut { background: #f0f0f0; border: 0; }
.gut .exp { display: block; }
.name { border-right: 1px solid #ececec; }

.statusbar { display: flex; justify-content: space-between; height: 21px; padding: 0 13px 0 4px; border-top: 1px solid #d4d4d4; line-height: 21px; }

.taskbar { position: relative; display: flex; gap: 2px; height: 40px; overflow: hidden; background: #b6947b; border-top: 1px solid #a8857c; }
.wall { position: absolute; inset: 0; width: 100%; }
.taskbar > button, .tray { position: relative; }
.start { width: 49px; }
.task { width: 60px; border: 1px solid #8c6c5c; background: #c6a898a0; box-shadow: inset 0 0 0 1px #d8c0b080; }
.task.plain { border: 0; background: none; box-shadow: none; }
.task.stack { padding-right: 8px; background: linear-gradient(90deg, transparent 51px, #8c6c5c 51px 52px, transparent 52px 55px, #8c6c5c 55px 56px, transparent 56px), #c6a898a0; }
.task.active { border-color: #fff; background: #d0bcb4; }
.tray { margin-left: auto; display: flex; align-items: center; gap: 8px; padding-right: 18px; color: #fff; }
.more { align-self: flex-start; font-size: 14px; font-weight: 700; margin-right: 3px; }
.up { margin-right: 4px; }
time { margin-left: 9px; text-align: center; line-height: 17px; }
```
